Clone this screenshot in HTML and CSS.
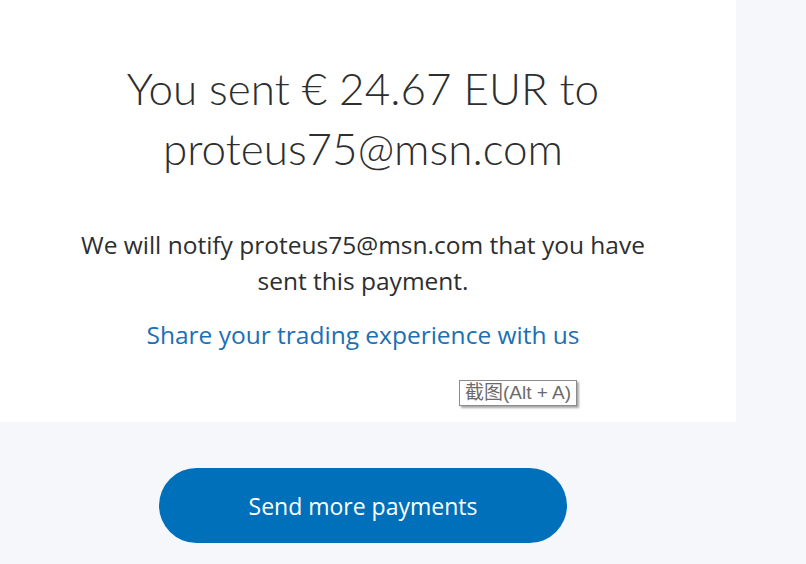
FILE: index.html
```html
<!DOCTYPE html>
<html lang="en">
<head>
<meta charset="utf-8">
<link rel="stylesheet" href="styles.css">
</head>
<body>
<main class="page">
  <section class="card">
    <h1 class="title">You sent € 24.67 EUR to<br>proteus75@msn.com</h1>
    <p class="notice">We will notify proteus75@msn.com that you have<br>sent this payment.</p>
    <a class="share" href="#">Share your trading experience with us</a>
    <span class="tooltip">截图(Alt + A)</span>
  </section>
  <div class="actions">
    <button class="primary" type="button">Send more payments</button>
  </div>
</main>
</body>
</html>
```

FILE: styles.css
```css
* { box-sizing: border-box; }
html, body {
  margin: 0;
  padding: 0;
  background: #f5f7fa;
  width: 806px;
  height: 564px;
  overflow: hidden;
}
.page {
  width: 736px;
}
.card {
  position: relative;
  background: #ffffff;
  height: 422px;
  padding: 58px 10px 0 0;
  display: flex;
  flex-direction: column;
  align-items: center;
  text-align: center;
}
.title {
  margin: 0;
  font-family: "Lato", sans-serif;
  font-weight: 300;
  font-size: 44px;
  line-height: 60px;
  color: #2c2e2f;
}
.notice {
  margin: 49px 0 0;
  font-family: "Open Sans", sans-serif;
  font-size: 24.5px;
  line-height: 36px;
  color: #2c2e2f;
}
.share {
  margin-top: 20px;
  font-family: "Open Sans", sans-serif;
  font-size: 24.5px;
  line-height: 32px;
  color: #1a6fb5;
  text-decoration: none;
}
.tooltip {
  position: absolute;
  left: 459px;
  top: 380px;
  height: 26px;
  padding: 0 5px;
  border: 1px solid #8c8c8c;
  background: #ffffff;
  box-shadow: 2px 2px 2px rgba(0,0,0,0.35);
  font-family: "Liberation Sans", "Noto Sans CJK SC", sans-serif;
  font-size: 19px;
  line-height: 24px;
  color: #6b6b6b;
}
.actions {
  display: flex;
  justify-content: center;
  padding: 46px 10px 0 0;
}
.primary {
  width: 408px;
  height: 75px;
  border: none;
  border-radius: 38px;
  background: #0070ba;
  color: #ffffff;
  font-family: "Open Sans", sans-serif;
  font-size: 23px;
  font-weight: 500;
  cursor: pointer;
}
```
